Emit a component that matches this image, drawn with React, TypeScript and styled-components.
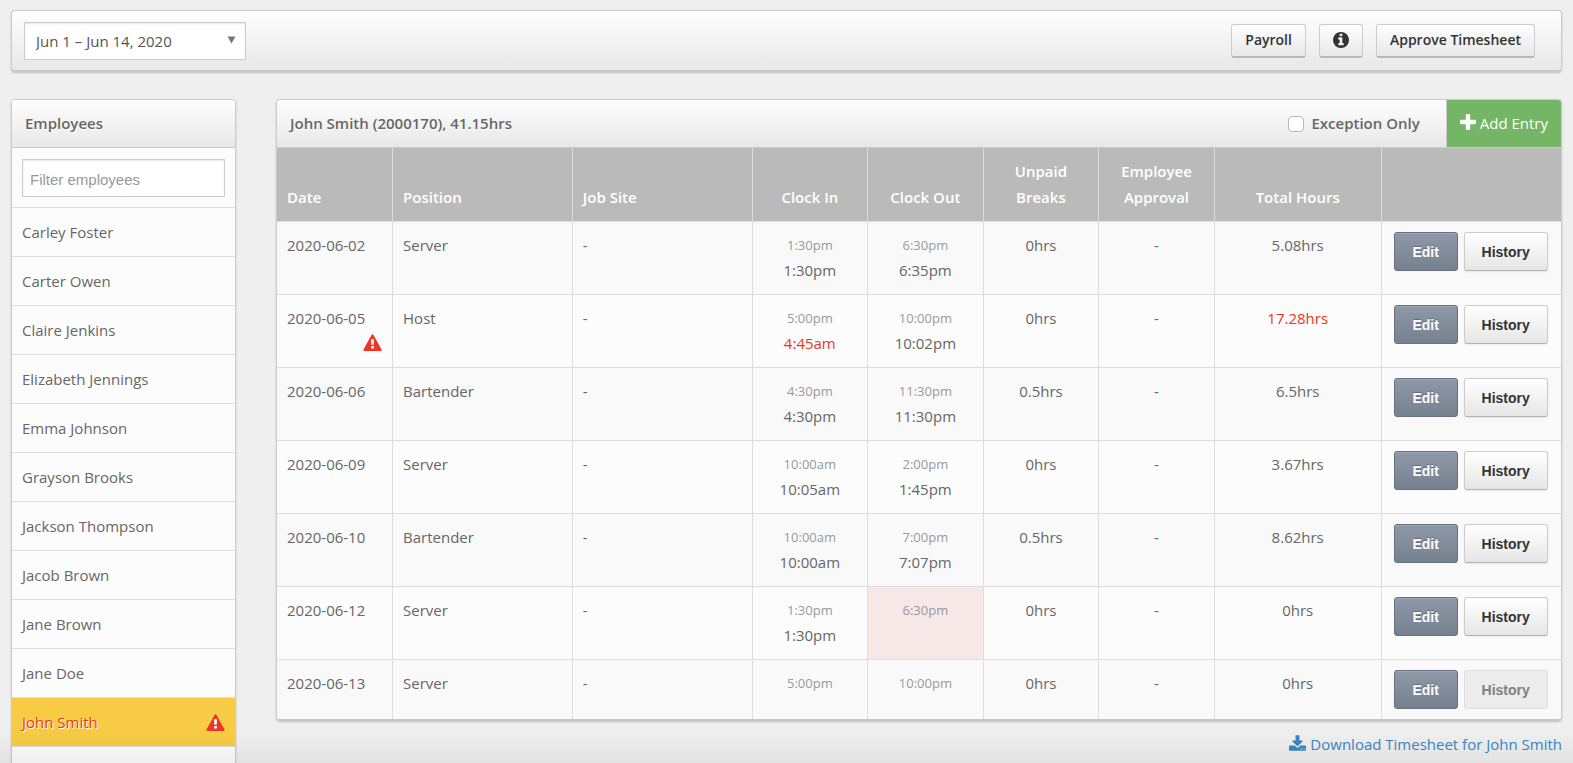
import React, { useState } from "react";
import styled, { createGlobalStyle, css } from "styled-components";

const GlobalStyle = createGlobalStyle`
  * { box-sizing: border-box; }
  body {
    margin: 0;
    background: #efefef;
    color: #666;
    font: 15px/25px "Open Sans", "Noto Sans", sans-serif;
  }
`;

const panel = css`
  border: 1px solid #ccc;
  border-radius: 4px;
  box-shadow: 0 1px 2px rgba(0, 0, 0, 0.2);
`;
const raised = css`
  background: linear-gradient(#fefefe, #e8e8e8);
`;

const Page = styled.div`
  height: 100vh;
  overflow: hidden;
  padding: 10px 11px 0;
`;

const Toolbar = styled.header`
  ${panel}
  ${raised}
  display: flex;
  align-items: center;
  gap: 13px;
  height: 62px;
  padding: 0 26px 0 12px;
  border-bottom: 2px solid #c8c8c8;
`;

const PeriodBox = styled.div`
  display: grid;
  align-items: center;
  margin-right: auto;
  width: 222px;
  height: 38px;
  border: 1px solid #ccc;
  background: #fff;
  box-shadow: inset 0 1px 2px rgba(0, 0, 0, 0.1);

  > * { grid-area: 1 / 1; }
  > svg {
    justify-self: end;
    margin: 0 9px 2px 0;
    pointer-events: none;
  }
`;

const PeriodSelect = styled.select`
  appearance: none;
  width: 100%;
  height: 36px;
  padding: 2px 11px 0;
  border: 0;
  background: transparent;
  color: #555;
  font: inherit;
`;

const ToolButton = styled.button`
  ${raised}
  display: flex;
  align-items: center;
  justify-content: center;
  height: 34px;
  padding: 0 13px;
  border: 1px solid #ccc;
  border-bottom: 2px solid #b8b8b8;
  border-radius: 3px;
  color: #333;
  font: 600 14px/20px "Open Sans", "Noto Sans", sans-serif;
`;

const Columns = styled.div`
  display: flex;
  align-items: flex-start;
  gap: 40px;
  margin-top: 27px;
`;

const Sidebar = styled.aside`
  ${panel}
  flex: 0 0 225px;
  background: #fcfcfc;
`;

const PanelHeader = styled.div`
  ${raised}
  display: flex;
  align-items: center;
  height: 48px;
  padding-left: 13px;
  border-bottom: 1px solid #ccc;
  border-radius: 3px 3px 0 0;
`;

const PanelTitle = styled.h2`
  margin: 0;
  font-size: 15px;
  font-weight: 600;
  text-shadow: 0 1px 0 #fff;
`;

const FilterRow = styled.div`
  padding: 11px 10px 10px;
`;

const FilterInput = styled.input`
  display: block;
  width: 100%;
  height: 38px;
  padding: 2px 7px 0;
  border: 1px solid #ccc;
  background: #fff;
  box-shadow: inset 0 1px 2px rgba(0, 0, 0, 0.1);
  font: 15px/20px "Liberation Sans", Arial, sans-serif;

  &::placeholder { color: #999; opacity: 1; }
`;

const EmployeeList = styled.ul`
  margin: 0;
  padding: 0;
  list-style: none;
`;

const EmployeeLink = styled.a<{ $active: boolean }>`
  display: flex;
  align-items: center;
  justify-content: space-between;
  height: 49px;
  padding: 0 10px;
  border-top: 1px solid #ddd;
  background: ${(p) => (p.$active ? "#f7cc44" : "transparent")};
  color: ${(p) => (p.$active ? "#ee3524" : "#666")};
  text-decoration: none;
  text-shadow: 1px 1px 0 #fff;
`;

const Main = styled.main`
  flex: 1;
  min-width: 0;
`;

const Sheet = styled.section`
  ${panel}
  border-bottom: 2px solid #c8c8c8;
  overflow: hidden;
`;

const ExceptionLabel = styled.label`
  display: flex;
  align-items: center;
  gap: 7px;
  margin: 0 26px 0 auto;
  font-weight: 600;
`;

const ExceptionBox = styled.input`
  appearance: none;
  width: 16px;
  height: 16px;
  margin: 0;
  border: 1px solid #b8b8b8;
  border-radius: 4px;
  background: #fff;

  &:checked { background: #3b86c6; }
`;

const AddButton = styled.button`
  display: flex;
  align-items: center;
  gap: 4px;
  align-self: stretch;
  padding: 0 13px;
  border: 0;
  border-left: 1px solid #ccc;
  background: #74b566;
  color: #fff;
  font: inherit;

  > svg { margin-bottom: 4px; }
`;

const Table = styled.table`
  width: 100%;
  border-collapse: collapse;
  table-layout: fixed;
`;

const Col = styled.col<{ $width: string }>`
  width: ${(p) => p.$width};
`;

const HeadCell = styled.th<{ $center?: boolean }>`
  height: 73px;
  padding: 10px 10px 11px;
  border-right: 1px solid #ddd;
  background: #bababa;
  color: #fff;
  font-weight: 600;
  line-height: 26px;
  text-align: ${(p) => (p.$center ? "center" : "left")};
  vertical-align: bottom;

  &:last-child { border-right: 0; }
`;

const Row = styled.tr`
  background: #fcfcfc;

  &:nth-child(odd) { background: #f9f9f9; }
`;

const Cell = styled.td<{ $center?: boolean; $missing?: boolean }>`
  padding: 11px 10px;
  border-top: 1px solid #ddd;
  border-right: 1px solid #ddd;
  background: ${(p) => (p.$missing ? "#f7e7e7" : "transparent")};
  text-align: ${(p) => (p.$center ? "center" : "left")};
  vertical-align: top;

  &:last-child {
    padding: 10px 12px;
    border-right: 0;
  }
`;

const AlertLine = styled.div`
  display: flex;
  align-items: center;
  justify-content: flex-end;
  height: 22px;
`;

const Scheduled = styled.div`
  color: #999;
  font-size: 13px;
`;

const Value = styled.div<{ $alert?: boolean }>`
  color: ${(p) => (p.$alert ? "#ee3524" : "inherit")};
`;

const Actions = styled.div`
  display: flex;
  gap: 6px;
`;

const RowButton = styled.button<{ $dark?: boolean }>`
  width: 84px;
  height: 39px;
  border: 1px solid #ccc;
  border-bottom-color: #b3b3b3;
  border-radius: 3px;
  background: linear-gradient(#fff, #e6e6e6);
  box-shadow: 0 1px 2px rgba(0, 0, 0, 0.08);
  color: #333;
  font: bold 14px/20px "Liberation Sans", Arial, sans-serif;

  ${(p) =>
    p.$dark &&
    css`
      width: 64px;
      border-color: #667080;
      background: linear-gradient(#8f98a8, #76818f);
      box-shadow: inset 0 1px 0 rgba(255, 255, 255, 0.15);
      color: #fff;
      text-shadow: 0 -1px 0 rgba(0, 0, 0, 0.25);
    `}

  &:disabled {
    border-color: #ddd;
    background: #ececec;
    box-shadow: none;
    color: #808080;
  }
`;

const DownloadRow = styled.div`
  display: flex;
  justify-content: flex-end;
  margin-top: 11px;
`;

const DownloadLink = styled.a`
  display: flex;
  align-items: center;
  gap: 4px;
  color: #3b86c6;
  text-decoration: none;

  > svg { margin-bottom: 4px; }
`;

const BottomShade = styled.div`
  position: fixed;
  inset: auto 0 0;
  height: 32px;
  background: linear-gradient(transparent, rgba(0, 0, 0, 0.05));
  pointer-events: none;
`;

const WarningIcon = () => (
  <svg width="19" height="17" viewBox="0 0 19 17" role="img" aria-label="Exception">
    <path
      d="M9.500 0.300Q10.200 0.300 10.500 1L18.500 15.400Q19 16.800 17.600 17H1.400Q0 16.800 0.500 15.400L8.500 1Q8.800 0.300 9.500 0.300Z"
      fill="#ee3524"
    />
    <path d="M8 5.200H11L10.700 10.700H8.300ZM8.100 12H10.900V14.600H8.100Z" fill="#fff" />
  </svg>
);

const InfoIcon = () => (
  <svg width="16" height="16" viewBox="128 128 1536 1536" fill="currentColor" aria-hidden="true">
    <path d="M1152 1376v-160q0-14-9-23t-23-9h-96v-512q0-14-9-23t-23-9h-320q-14 0-23 9t-9 23v160q0 14 9 23t23 9h96v320h-96q-14 0-23 9t-9 23v160q0 14 9 23t23 9h448q14 0 23-9t9-23zm-128-896v-160q0-14-9-23t-23-9h-192q-14 0-23 9t-9 23v160q0 14 9 23t23 9h192q14 0 23-9t9-23zm640 416q0 209-103 385.500t-279.500 279.500-385.500 103-385.500-103-279.500-279.500-103-385.500 103-385.500 279.500-279.500 385.500-103 385.500 103 279.500 279.500 103 385.500z" />
  </svg>
);

const PlusIcon = () => (
  <svg width="16" height="16" viewBox="192 128 1408 1408" fill="currentColor" aria-hidden="true">
    <path d="M1600 736v192q0 40-28 68t-68 28h-416v416q0 40-28 68t-68 28h-192q-40 0-68-28t-28-68v-416h-416q-40 0-68-28t-28-68v-192q0-40 28-68t68-28h416v-416q0-40 28-68t68-28h192q40 0 68 28t28 68v416h416q40 0 68 28t28 68z" />
  </svg>
);

const DownloadIcon = () => (
  <svg width="17" height="16" viewBox="64 0 1664 1536" fill="currentColor" aria-hidden="true">
    <path d="M1344 1344q0-26-19-45t-45-19-45 19-19 45 19 45 45 19 45-19 19-45zm256 0q0-26-19-45t-45-19-45 19-19 45 19 45 45 19 45-19 19-45zm128-224v320q0 40-28 68t-68 28h-1472q-40 0-68-28t-28-68v-320q0-40 28-68t68-28h465l135 136q58 56 136 56t136-56l136-136h464q40 0 68 28t28 68zm-325-569q17 41-14 70l-448 448q-18 19-45 19t-45-19l-448-448q-31-29-14-70 17-39 59-39h256v-448q0-26 19-45t45-19h256q26 0 45 19t19 45v448h256q42 0 59 39z" />
  </svg>
);

const employees = [
  "Carley Foster", "Carter Owen", "Claire Jenkins", "Elizabeth Jennings",
  "Emma Johnson", "Grayson Brooks", "Jackson Thompson", "Jacob Brown",
  "Jane Brown", "Jane Doe", "John Smith", "John Stansfield",
];

type Entry = {
  date: string;
  position: string;
  planIn: string;
  clockIn?: string;
  planOut: string;
  clockOut?: string;
  breaks: string;
  total: string;
  exception?: boolean;
  missingOut?: boolean;
  noHistory?: boolean;
};

const entries: Entry[] = [
  { date: "2020-06-02", position: "Server", planIn: "1:30pm", clockIn: "1:30pm", planOut: "6:30pm", clockOut: "6:35pm", breaks: "0hrs", total: "5.08hrs" },
  { date: "2020-06-05", position: "Host", planIn: "5:00pm", clockIn: "4:45am", planOut: "10:00pm", clockOut: "10:02pm", breaks: "0hrs", total: "17.28hrs", exception: true },
  { date: "2020-06-06", position: "Bartender", planIn: "4:30pm", clockIn: "4:30pm", planOut: "11:30pm", clockOut: "11:30pm", breaks: "0.5hrs", total: "6.5hrs" },
  { date: "2020-06-09", position: "Server", planIn: "10:00am", clockIn: "10:05am", planOut: "2:00pm", clockOut: "1:45pm", breaks: "0hrs", total: "3.67hrs" },
  { date: "2020-06-10", position: "Bartender", planIn: "10:00am", clockIn: "10:00am", planOut: "7:00pm", clockOut: "7:07pm", breaks: "0.5hrs", total: "8.62hrs" },
  { date: "2020-06-12", position: "Server", planIn: "1:30pm", clockIn: "1:30pm", planOut: "6:30pm", breaks: "0hrs", total: "0hrs", missingOut: true },
  { date: "2020-06-13", position: "Server", planIn: "5:00pm", planOut: "10:00pm", breaks: "0hrs", total: "0hrs", noHistory: true },
];

const columnWidths = ["9%", "14%", "14%", "9%", "9%", "9%", "9%", "13%", "14%"];

export default function App() {
  const [filter, setFilter] = useState("");
  const [exceptionOnly, setExceptionOnly] = useState(false);
  const shownEmployees = employees.filter((name) => name.toLowerCase().includes(filter.toLowerCase()));
  const shownEntries = entries.filter((e) => !exceptionOnly || e.exception || e.missingOut);

  return (
    <>
      <GlobalStyle />
      <Page>
        <Toolbar>
          <PeriodBox>
            <PeriodSelect aria-label="Pay period">
              <option>Jun 1 – Jun 14, 2020</option>
            </PeriodSelect>
            <svg width="9" height="8" viewBox="0 0 9 8" aria-hidden="true">
              <path d="M0.500 0.500H8.500L4.500 7.500Z" fill="#777" />
            </svg>
          </PeriodBox>
          <ToolButton type="button">Payroll</ToolButton>
          <ToolButton type="button" aria-label="Information"><InfoIcon /></ToolButton>
          <ToolButton type="button">Approve Timesheet</ToolButton>
        </Toolbar>

        <Columns>
          <Sidebar>
            <PanelHeader><PanelTitle>Employees</PanelTitle></PanelHeader>
            <FilterRow>
              <FilterInput
                aria-label="Filter employees"
                placeholder="Filter employees"
                value={filter}
                onChange={(e) => setFilter(e.target.value)}
              />
            </FilterRow>
            <EmployeeList>
              {shownEmployees.map((name) => (
                <li key={name}>
                  <EmployeeLink href="#" $active={name === "John Smith"}>
                    {name}
                    {name === "John Smith" && <WarningIcon />}
                  </EmployeeLink>
                </li>
              ))}
            </EmployeeList>
          </Sidebar>

          <Main>
            <Sheet>
              <PanelHeader>
                <PanelTitle>John Smith (2000170), 41.15hrs</PanelTitle>
                <ExceptionLabel>
                  <ExceptionBox
                    type="checkbox"
                    checked={exceptionOnly}
                    onChange={(e) => setExceptionOnly(e.target.checked)}
                  />
                  Exception Only
                </ExceptionLabel>
                <AddButton type="button"><PlusIcon />Add Entry</AddButton>
              </PanelHeader>
              <Table>
                <colgroup>
                  {columnWidths.map((width, i) => <Col key={i} $width={width} />)}
                </colgroup>
                <thead>
                  <tr>
                    <HeadCell>Date</HeadCell>
                    <HeadCell>Position</HeadCell>
                    <HeadCell>Job Site</HeadCell>
                    <HeadCell $center>Clock In</HeadCell>
                    <HeadCell $center>Clock Out</HeadCell>
                    <HeadCell $center>Unpaid Breaks</HeadCell>
                    <HeadCell $center>Employee Approval</HeadCell>
                    <HeadCell $center>Total Hours</HeadCell>
                    <HeadCell aria-label="Actions" />
                  </tr>
                </thead>
                <tbody>
                  {shownEntries.map((e) => (
                    <Row key={e.date}>
                      <Cell>
                        {e.date}
                        {e.exception && <AlertLine><WarningIcon /></AlertLine>}
                      </Cell>
                      <Cell>{e.position}</Cell>
                      <Cell>-</Cell>
                      <Cell $center>
                        <Scheduled>{e.planIn}</Scheduled>
                        {e.clockIn && <Value $alert={e.exception}>{e.clockIn}</Value>}
                      </Cell>
                      <Cell $center $missing={e.missingOut}>
                        <Scheduled>{e.planOut}</Scheduled>
                        {e.clockOut && <Value>{e.clockOut}</Value>}
                      </Cell>
                      <Cell $center>{e.breaks}</Cell>
                      <Cell $center>-</Cell>
                      <Cell $center><Value $alert={e.exception}>{e.total}</Value></Cell>
                      <Cell>
                        <Actions>
                          <RowButton type="button" $dark>Edit</RowButton>
                          <RowButton type="button" disabled={e.noHistory}>History</RowButton>
                        </Actions>
                      </Cell>
                    </Row>
                  ))}
                </tbody>
              </Table>
            </Sheet>
            <DownloadRow>
              <DownloadLink href="#"><DownloadIcon />Download Timesheet for John Smith</DownloadLink>
            </DownloadRow>
          </Main>
        </Columns>
      </Page>
      <BottomShade />
    </>
  );
}
